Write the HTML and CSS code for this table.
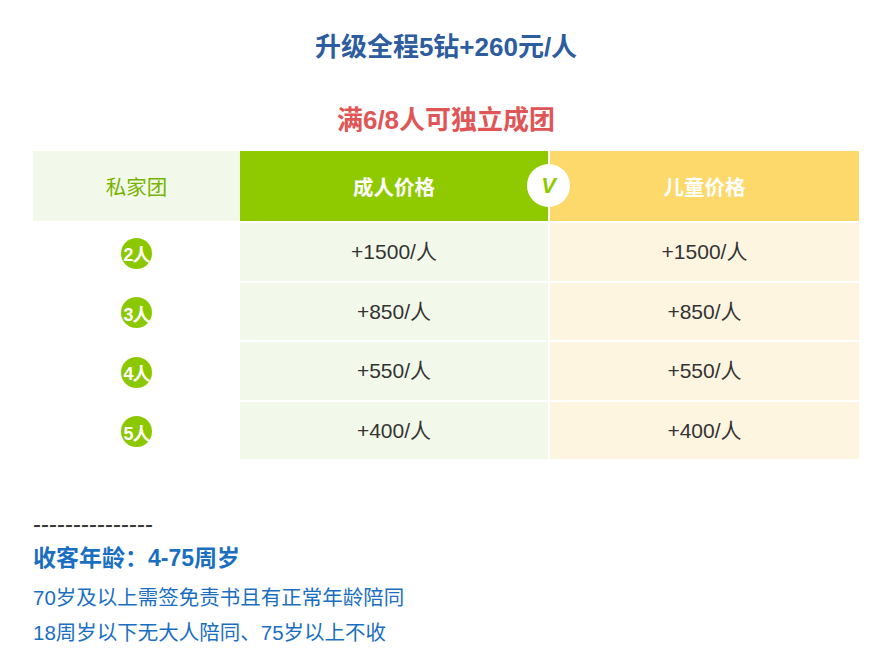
FILE: index.html
```html
<!DOCTYPE html>
<html lang="zh">
<head>
<meta charset="utf-8">
<title>私家团价格</title>
<link rel="stylesheet" href="styles.css">
</head>
<body>
<div class="page">
  <h2 class="title-upgrade">升级全程5钻+260元/人</h2>
  <h2 class="title-group">满6/8人可独立成团</h2>
  <div class="price-table">
    <div class="cell head head-name">私家团</div>
    <div class="cell head head-adult">成人价格<span class="vs">V</span></div>
    <div class="cell head head-child">儿童价格</div>

    <div class="cell name"><span class="badge">2人</span></div>
    <div class="cell adult">+1500/人</div>
    <div class="cell child">+1500/人</div>

    <div class="cell name"><span class="badge">3人</span></div>
    <div class="cell adult">+850/人</div>
    <div class="cell child">+850/人</div>

    <div class="cell name"><span class="badge">4人</span></div>
    <div class="cell adult">+550/人</div>
    <div class="cell child">+550/人</div>

    <div class="cell name"><span class="badge">5人</span></div>
    <div class="cell adult">+400/人</div>
    <div class="cell child">+400/人</div>
  </div>
  <div class="notes">
    <p class="dashes">---------------</p>
    <p class="notes-title">收客年龄：4-75周岁</p>
    <p class="note first">70岁及以上需签免责书且有正常年龄陪同</p>
    <p class="note">18周岁以下无大人陪同、75岁以上不收</p>
  </div>
</div>
</body>
</html>
```
FILE: styles.css
```css
* { box-sizing: border-box; }
html, body { margin: 0; padding: 0; background: #fff; }
body {
  font-family: "Liberation Sans", "Noto Sans CJK SC", sans-serif;
  color: #333;
}
.page {
  width: 880px;
  padding: 29px 21px 0 33px;
}
.title-upgrade, .title-group {
  margin: 0;
  text-align: center;
  font-size: 26px;
  font-weight: bold;
  line-height: 36px;
}
.title-upgrade { color: #2d5c9f; }
.title-group { color: #e05656; margin-top: 37px; }

.price-table {
  margin-top: 13px;
  display: grid;
  grid-template-columns: 207px 308px 311px;
  grid-template-rows: 70px repeat(4, 57.5px);
  row-gap: 2px;
}
.cell {
  display: flex;
  align-items: center;
  justify-content: center;
  font-size: 21px;
  color: #333;
}
.head { font-size: 20.5px; }
.head-name { background: #f3f9ea; color: #77b400; }
.head-adult {
  background: #8fc900;
  color: #fff;
  font-weight: bold;
  position: relative;
}
.head-child {
  background: #fdd96b;
  color: #fff;
  font-weight: bold;
  border-left: 2px solid #fff;
}
.vs {
  position: absolute;
  right: -22px;
  top: 13px;
  width: 43px;
  height: 43px;
  border-radius: 50%;
  background: #fff;
  color: #8fc900;
  font-style: italic;
  font-weight: bold;
  font-size: 22px;
  display: flex;
  align-items: center;
  justify-content: center;
  z-index: 1;
}
.name { background: #fff; padding-top: 3px; }
.adult { background: #f3f9ea; padding-bottom: 3px; }
.child { background: #fef5e0; border-left: 2px solid #fff; padding-bottom: 3px; }
.badge {
  width: 31px;
  height: 31px;
  border-radius: 50%;
  background: #8cc800;
  color: #fff;
  font-weight: bold;
  font-size: 18px;
  letter-spacing: -1px;
  display: flex;
  align-items: center;
  justify-content: center;
}

.notes { margin-top: 48px; color: #1a6fc1; }
.notes p { margin: 0; }
.dashes {
  color: #333;
  font-size: 24px;
  line-height: 34px;
}
.notes-title {
  font-size: 23px;
  font-weight: bold;
  line-height: 34px;
}
.note {
  font-size: 20.5px;
  line-height: 35px;
}
.note.first { margin-top: 4.5px; }
```
